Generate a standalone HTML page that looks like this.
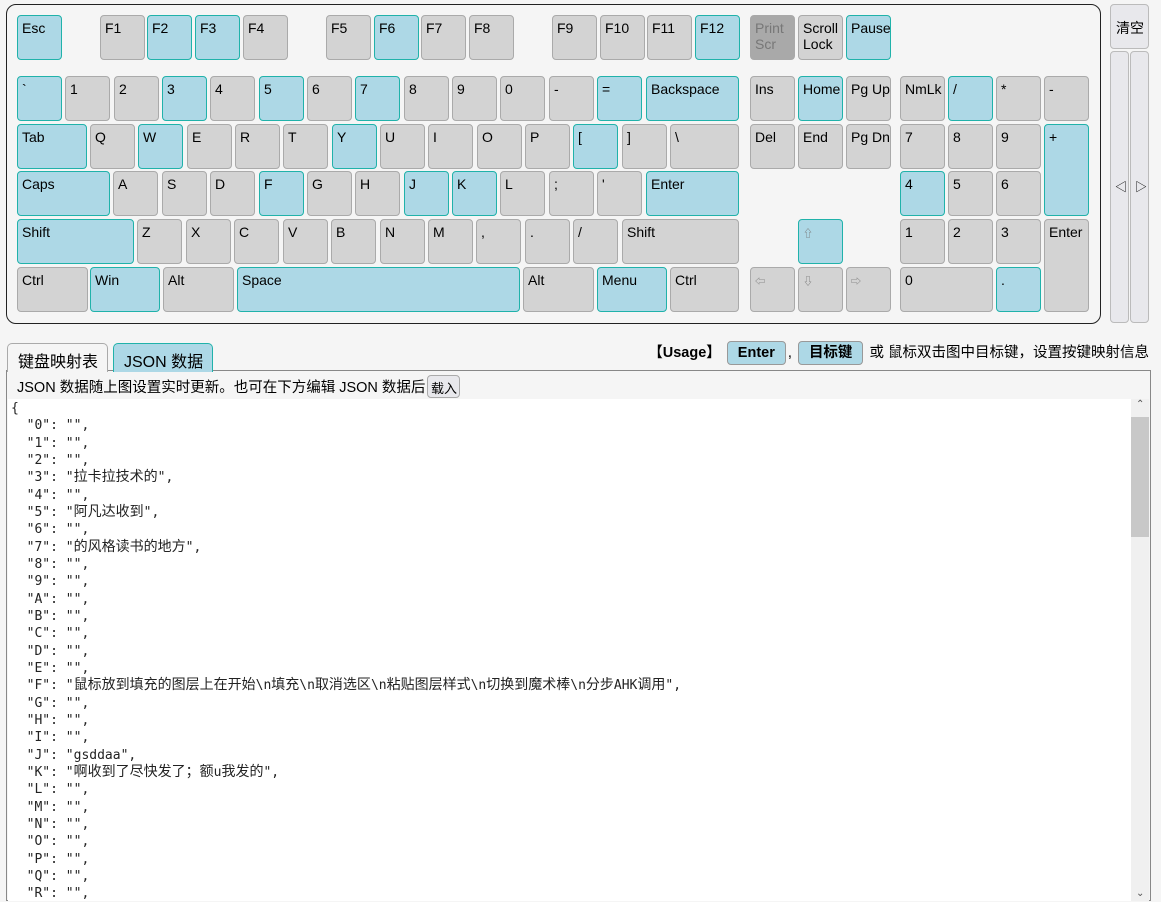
<!DOCTYPE html>
<html><head><meta charset="utf-8">
<style>
*{box-sizing:border-box;margin:0;padding:0}
body{width:1161px;height:902px;background:#f5f5f5;font-family:"Liberation Sans","Noto Sans CJK SC",sans-serif;font-size:14px;color:#000;position:relative;overflow:hidden}
.kb{position:absolute;left:6px;top:4px;width:1095px;height:320px;border:1px solid #222;border-radius:10px;background:#f5f5f5}
.k{position:absolute;height:45px;width:45px;background:#d3d3d3;border:1px solid #aaa;border-radius:4px;padding:4px 0 0 4px;font-size:14px;line-height:16px;white-space:nowrap;overflow:hidden}
.b{background:#add8e6;border-color:#20b2aa}
.d{background:#a9a9a9;color:#777;border-color:#a9a9a9}
.sm{font-size:10px;color:#777}
.btn{position:absolute;background:#e8e8ec;border:1px solid #bbb;border-radius:4px}
.tab{position:absolute;top:343px;height:29px;border:1px solid #aaa;border-bottom:none;border-radius:5px 5px 0 0;font-size:16px;padding:4px 0 0 10px}
.panel{position:absolute;left:6px;top:370px;width:1145px;height:531px;border:1px solid #888;background:#f5f5f5}
.ta{position:absolute;left:1px;top:28px;width:1141px;height:502px;background:#fff;overflow:hidden}
pre{font-family:"DejaVu Sans Mono","Noto Sans CJK SC",monospace;font-size:13px;line-height:17.33px;padding:0 0 0 3px;margin-top:1px;color:#222}
.c{font-size:14px;line-height:10px}
.sb{position:absolute;right:0;top:0;width:18px;height:502px;background:#f0f0f0}
.th{position:absolute;left:0;top:18px;width:18px;height:120px;background:#c8c8c8}
.usage{position:absolute;right:12px;top:341px;font-size:14.5px;line-height:20px;white-space:nowrap}
.pill{display:inline-block;background:#add8e6;border:1px solid #999;border-radius:4px;padding:1px 10px;font-weight:bold;margin:0 2px}
</style></head><body>
<div class="kb"></div>

<div class="k b" style="left:17px;top:15px">Esc</div>
<div class="k" style="left:100px;top:15px">F1</div>
<div class="k b" style="left:147px;top:15px">F2</div>
<div class="k b" style="left:195px;top:15px">F3</div>
<div class="k" style="left:243px;top:15px">F4</div>
<div class="k" style="left:326px;top:15px">F5</div>
<div class="k b" style="left:374px;top:15px">F6</div>
<div class="k" style="left:421px;top:15px">F7</div>
<div class="k" style="left:469px;top:15px">F8</div>
<div class="k" style="left:552px;top:15px">F9</div>
<div class="k" style="left:600px;top:15px">F10</div>
<div class="k" style="left:647px;top:15px">F11</div>
<div class="k b" style="left:695px;top:15px">F12</div>
<div class="k d" style="left:750px;top:15px">Print<br>Scr</div>
<div class="k" style="left:798px;top:15px">Scroll<br>Lock</div>
<div class="k b" style="left:846px;top:15px">Pause</div>

<div class="k b" style="left:17px;top:76px">`</div>
<div class="k" style="left:65px;top:76px">1</div>
<div class="k" style="left:114px;top:76px">2</div>
<div class="k b" style="left:162px;top:76px">3</div>
<div class="k" style="left:210px;top:76px">4</div>
<div class="k b" style="left:259px;top:76px">5</div>
<div class="k" style="left:307px;top:76px">6</div>
<div class="k b" style="left:355px;top:76px">7</div>
<div class="k" style="left:404px;top:76px">8</div>
<div class="k" style="left:452px;top:76px">9</div>
<div class="k" style="left:500px;top:76px">0</div>
<div class="k" style="left:549px;top:76px">-</div>
<div class="k b" style="left:597px;top:76px">=</div>
<div class="k b" style="left:646px;top:76px;width:93px">Backspace</div>

<div class="k b" style="left:17px;top:124px;width:70px">Tab</div>
<div class="k" style="left:90px;top:124px">Q</div>
<div class="k b" style="left:138px;top:124px">W</div>
<div class="k" style="left:187px;top:124px">E</div>
<div class="k" style="left:235px;top:124px">R</div>
<div class="k" style="left:283px;top:124px">T</div>
<div class="k b" style="left:332px;top:124px">Y</div>
<div class="k" style="left:380px;top:124px">U</div>
<div class="k" style="left:428px;top:124px">I</div>
<div class="k" style="left:477px;top:124px">O</div>
<div class="k" style="left:525px;top:124px">P</div>
<div class="k b" style="left:573px;top:124px">[</div>
<div class="k" style="left:622px;top:124px">]</div>
<div class="k" style="left:670px;top:124px;width:69px">\</div>

<div class="k b" style="left:17px;top:171px;width:93px">Caps</div>
<div class="k" style="left:113px;top:171px">A</div>
<div class="k" style="left:162px;top:171px">S</div>
<div class="k" style="left:210px;top:171px">D</div>
<div class="k b" style="left:259px;top:171px">F</div>
<div class="k" style="left:307px;top:171px">G</div>
<div class="k" style="left:355px;top:171px">H</div>
<div class="k b" style="left:404px;top:171px">J</div>
<div class="k b" style="left:452px;top:171px">K</div>
<div class="k" style="left:500px;top:171px">L</div>
<div class="k" style="left:549px;top:171px">;</div>
<div class="k" style="left:597px;top:171px">'</div>
<div class="k b" style="left:646px;top:171px;width:93px">Enter</div>

<div class="k b" style="left:17px;top:219px;width:117px">Shift</div>
<div class="k" style="left:137px;top:219px">Z</div>
<div class="k" style="left:186px;top:219px">X</div>
<div class="k" style="left:234px;top:219px">C</div>
<div class="k" style="left:283px;top:219px">V</div>
<div class="k" style="left:331px;top:219px">B</div>
<div class="k" style="left:380px;top:219px">N</div>
<div class="k" style="left:428px;top:219px">M</div>
<div class="k" style="left:476px;top:219px">,</div>
<div class="k" style="left:525px;top:219px">.</div>
<div class="k" style="left:573px;top:219px">/</div>
<div class="k" style="left:622px;top:219px;width:117px">Shift</div>

<div class="k" style="left:17px;top:267px;width:71px">Ctrl</div>
<div class="k b" style="left:90px;top:267px;width:70px">Win</div>
<div class="k" style="left:163px;top:267px;width:71px">Alt</div>
<div class="k b" style="left:237px;top:267px;width:283px">Space</div>
<div class="k" style="left:523px;top:267px;width:71px">Alt</div>
<div class="k b" style="left:597px;top:267px;width:70px">Menu</div>
<div class="k" style="left:670px;top:267px;width:69px">Ctrl</div>

<div class="k" style="left:750px;top:76px">Ins</div>
<div class="k b" style="left:798px;top:76px">Home</div>
<div class="k" style="left:846px;top:76px">Pg Up</div>
<div class="k" style="left:750px;top:124px">Del</div>
<div class="k" style="left:798px;top:124px">End</div>
<div class="k" style="left:846px;top:124px">Pg Dn</div>
<div class="k b" style="left:798px;top:219px"><span class="sm">⇧</span></div>
<div class="k" style="left:750px;top:267px"><span class="sm">⇦</span></div>
<div class="k" style="left:798px;top:267px"><span class="sm">⇩</span></div>
<div class="k" style="left:846px;top:267px"><span class="sm">⇨</span></div>

<div class="k" style="left:900px;top:76px">NmLk</div>
<div class="k b" style="left:948px;top:76px">/</div>
<div class="k" style="left:996px;top:76px">*</div>
<div class="k" style="left:1044px;top:76px">-</div>
<div class="k" style="left:900px;top:124px">7</div>
<div class="k" style="left:948px;top:124px">8</div>
<div class="k" style="left:996px;top:124px">9</div>
<div class="k b" style="left:1044px;top:124px;height:92px">+</div>
<div class="k b" style="left:900px;top:171px">4</div>
<div class="k" style="left:948px;top:171px">5</div>
<div class="k" style="left:996px;top:171px">6</div>
<div class="k" style="left:900px;top:219px">1</div>
<div class="k" style="left:948px;top:219px">2</div>
<div class="k" style="left:996px;top:219px">3</div>
<div class="k" style="left:1044px;top:219px;height:93px">Enter</div>
<div class="k" style="left:900px;top:267px;width:93px">0</div>
<div class="k b" style="left:996px;top:267px">.</div>

<div class="btn" style="left:1110px;top:4px;width:39px;height:45px;font-size:14px;padding:13px 0 0 5px">清空</div>
<div class="btn" style="left:1110px;top:51px;width:19px;height:272px;font-size:12px;padding:126px 0 0 4px">◁</div>
<div class="btn" style="left:1130px;top:51px;width:19px;height:272px;font-size:12px;padding:126px 0 0 4px">▷</div>

<div class="usage"><b>【Usage】</b> <span class="pill">Enter</span>, <span class="pill">目标键</span> 或 鼠标双击图中目标键，设置按键映射信息</div>

<div class="panel">
<div style="position:absolute;left:10px;top:5px;font-size:14.5px">JSON 数据随上图设置实时更新。也可在下方编辑 JSON 数据后</div>
<div style="position:absolute;left:420px;top:4px;width:33px;height:23px;background:#e8e8ec;border:1px solid #aaa;border-radius:4px;font-size:13px;padding:2px 0 0 3px">载入</div>
<div class="ta"><pre>{
  "0": "",
  "1": "",
  "2": "",
  "3": "<span class="c">拉卡拉技术的</span>",
  "4": "",
  "5": "<span class="c">阿凡达收到</span>",
  "6": "",
  "7": "<span class="c">的风格读书的地方</span>",
  "8": "",
  "9": "",
  "A": "",
  "B": "",
  "C": "",
  "D": "",
  "E": "",
  "F": "<span class="c">鼠标放到填充的图层上在开始</span>\n<span class="c">填充</span>\n<span class="c">取消选区</span>\n<span class="c">粘贴图层样式</span>\n<span class="c">切换到魔术棒</span>\n<span class="c">分步</span>AHK<span class="c">调用</span>",
  "G": "",
  "H": "",
  "I": "",
  "J": "gsddaa",
  "K": "<span class="c">啊收到了尽快发了；额</span>u<span class="c">我发的</span>",
  "L": "",
  "M": "",
  "N": "",
  "O": "",
  "P": "",
  "Q": "",
  "R": "",</pre>
<div class="sb"><div style="position:absolute;top:0;left:5px;font-size:10px;color:#555">⌃</div><div class="th"></div><div style="position:absolute;bottom:2px;left:5px;font-size:10px;color:#555">⌄</div></div>
</div>
</div>
<div class="tab" style="left:7px;width:101px;background:#f5f5f5">键盘映射表</div>
<div class="tab" style="left:113px;width:100px;background:#add8e6;border-color:#20b2aa">JSON 数据</div>
</body></html>
